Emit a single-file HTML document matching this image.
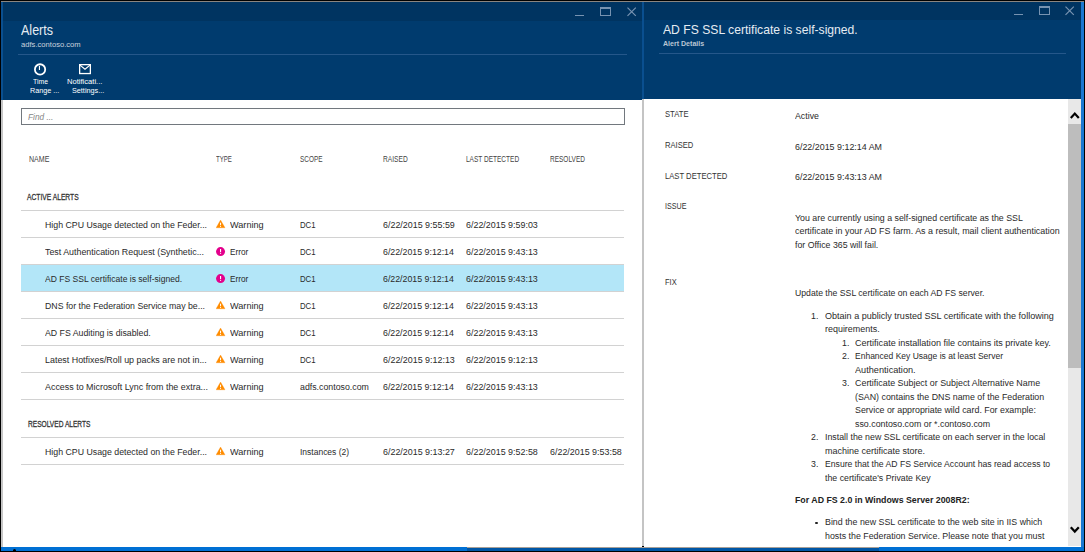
<!DOCTYPE html>
<html><head><meta charset="utf-8"><style>
html,body{margin:0;padding:0;width:1085px;height:552px;overflow:hidden;background:#000}
.r{position:absolute;box-sizing:content-box}
.t{position:absolute;line-height:1;white-space:nowrap;font-family:"Liberation Sans",sans-serif;transform-origin:0 0}
</style></head><body>
<div class="r" style="left:0px;top:0px;width:1085px;height:552px;background:#000;"></div>
<div class="r" style="left:1px;top:1px;width:1083px;height:1px;background:#8a8580;"></div>
<div class="r" style="left:1px;top:2px;width:641px;height:98px;background:#003b6e;"></div>
<div class="r" style="left:1px;top:2px;width:641px;height:19px;background:#003461;"></div>
<div class="r" style="left:1px;top:2px;width:2px;height:98px;background:#0a4f8f;"></div>
<div class="r" style="left:1px;top:100px;width:641px;height:447px;background:#fff;"></div>
<div class="r" style="left:1px;top:100px;width:2px;height:447px;background:#c6c6c6;"></div>
<div class="r" style="left:642px;top:2px;width:2px;height:97px;background:#0a4f8f;"></div>
<div class="r" style="left:642px;top:99px;width:2px;height:447px;background:#c4c4c4;"></div>
<div class="r" style="left:644px;top:2px;width:437px;height:97px;background:#003b6e;"></div>
<div class="r" style="left:644px;top:2px;width:437px;height:18px;background:#003461;"></div>
<div class="r" style="left:644px;top:99px;width:437px;height:448px;background:#fff;"></div>
<div class="r" style="left:1068px;top:99px;width:13px;height:447px;background:#e8e8e8;"></div>
<div class="r" style="left:1068px;top:124px;width:13px;height:244px;background:#bdbdbd;"></div>
<div class="r" style="left:1081px;top:2px;width:3px;height:549px;background:#1a78d2;"></div>
<div class="r" style="left:1px;top:547px;width:1083px;height:4px;background:#0070d4;"></div>
<div class="r" style="left:467px;top:547px;width:412px;height:1px;background:#a8a098;"></div>
<div class="r" style="left:467px;top:548px;width:412px;height:3px;background:#0056a6;"></div>
<div class="r" style="left:18px;top:54px;width:609px;height:1px;background:#25578a;"></div>
<svg class="r" style="left:30px;top:60px" width="20" height="20" viewBox="0 0 20 20"><circle cx="10.05" cy="9.4" r="5.15" fill="none" stroke="#fff" stroke-width="1.8"/><line x1="9.45" y1="6.1" x2="9.45" y2="10" stroke="#fff" stroke-width="1.1"/></svg>
<svg class="r" style="left:75px;top:60px" width="20" height="20" viewBox="0 0 20 20"><rect x="4.65" y="4.65" width="10.7" height="8.9" fill="none" stroke="#fff" stroke-width="1.3"/><polyline points="5,5.1 10,9.2 15,5.1" fill="none" stroke="#fff" stroke-width="1.2"/></svg>
<div class="r" style="left:575px;top:15.1px;width:9px;height:1.2px;background:#7793b1"></div>
<div class="r" style="left:600px;top:7.1px;width:11px;height:9px;box-sizing:border-box;border:1.2px solid #7793b1;border-top-width:2.6px"></div>
<svg class="r" style="left:626.6px;top:7.1px" width="10" height="10" viewBox="0 0 10 10"><path d="M0.5 0.6 L8.8 8.9 M8.8 0.6 L0.5 8.9" stroke="#7793b1" stroke-width="1.2"/></svg>
<div class="r" style="left:1014px;top:14.2px;width:9px;height:1.2px;background:#7793b1"></div>
<div class="r" style="left:1039px;top:6.2px;width:11px;height:9px;box-sizing:border-box;border:1.2px solid #7793b1;border-top-width:2.6px"></div>
<svg class="r" style="left:1065.4px;top:6.2px" width="10" height="10" viewBox="0 0 10 10"><path d="M0.5 0.6 L8.8 8.9 M8.8 0.6 L0.5 8.9" stroke="#7793b1" stroke-width="1.2"/></svg>
<div class="r" style="left:659px;top:53px;width:407px;height:1px;background:#25578a;"></div>
<div class="r" style="left:21px;top:108px;width:602px;height:15px;border:1px solid #72787e;background:#fff"></div>
<div class="r" style="left:21px;top:264px;width:603px;height:27px;background:#b3e6f8;"></div>
<div class="r" style="left:21px;top:210px;width:603px;height:1px;background:#d2d2d2;"></div>
<div class="r" style="left:21px;top:237px;width:603px;height:1px;background:#d2d2d2;"></div>
<div class="r" style="left:21px;top:264px;width:603px;height:1px;background:#d2d2d2;"></div>
<div class="r" style="left:21px;top:291px;width:603px;height:1px;background:#d2d2d2;"></div>
<div class="r" style="left:21px;top:318px;width:603px;height:1px;background:#d2d2d2;"></div>
<div class="r" style="left:21px;top:345px;width:603px;height:1px;background:#d2d2d2;"></div>
<div class="r" style="left:21px;top:372px;width:603px;height:1px;background:#d2d2d2;"></div>
<div class="r" style="left:21px;top:399px;width:603px;height:1px;background:#d2d2d2;"></div>
<div class="r" style="left:21px;top:437px;width:603px;height:1px;background:#d2d2d2;"></div>
<div class="r" style="left:21px;top:464px;width:603px;height:1px;background:#d2d2d2;"></div>
<svg class="r" style="left:216px;top:220.2px" width="10" height="9" viewBox="0 0 10 9"><path d="M4.55 0 L9.0 7.75 L0.1 7.75 Z" fill="#ff8c00" stroke="#ff8c00" stroke-width="0.3" stroke-linejoin="round"/><rect x="4.05" y="2.7" width="1.0" height="2.5" fill="#fff"/><rect x="4.05" y="5.9" width="1.0" height="1.0" fill="#fff"/></svg>
<svg class="r" style="left:216px;top:247.2px" width="10" height="10" viewBox="0 0 10 10"><circle cx="4.55" cy="4.6" r="4.5" fill="#e3008c"/><rect x="4.0" y="2.0" width="1.1" height="3.0" fill="#fff"/><rect x="4.0" y="5.8" width="1.1" height="1.0" fill="#fff"/></svg>
<svg class="r" style="left:216px;top:274.2px" width="10" height="10" viewBox="0 0 10 10"><circle cx="4.55" cy="4.6" r="4.5" fill="#e3008c"/><rect x="4.0" y="2.0" width="1.1" height="3.0" fill="#fff"/><rect x="4.0" y="5.8" width="1.1" height="1.0" fill="#fff"/></svg>
<svg class="r" style="left:216px;top:301.2px" width="10" height="9" viewBox="0 0 10 9"><path d="M4.55 0 L9.0 7.75 L0.1 7.75 Z" fill="#ff8c00" stroke="#ff8c00" stroke-width="0.3" stroke-linejoin="round"/><rect x="4.05" y="2.7" width="1.0" height="2.5" fill="#fff"/><rect x="4.05" y="5.9" width="1.0" height="1.0" fill="#fff"/></svg>
<svg class="r" style="left:216px;top:328.2px" width="10" height="9" viewBox="0 0 10 9"><path d="M4.55 0 L9.0 7.75 L0.1 7.75 Z" fill="#ff8c00" stroke="#ff8c00" stroke-width="0.3" stroke-linejoin="round"/><rect x="4.05" y="2.7" width="1.0" height="2.5" fill="#fff"/><rect x="4.05" y="5.9" width="1.0" height="1.0" fill="#fff"/></svg>
<svg class="r" style="left:216px;top:355.2px" width="10" height="9" viewBox="0 0 10 9"><path d="M4.55 0 L9.0 7.75 L0.1 7.75 Z" fill="#ff8c00" stroke="#ff8c00" stroke-width="0.3" stroke-linejoin="round"/><rect x="4.05" y="2.7" width="1.0" height="2.5" fill="#fff"/><rect x="4.05" y="5.9" width="1.0" height="1.0" fill="#fff"/></svg>
<svg class="r" style="left:216px;top:382.2px" width="10" height="9" viewBox="0 0 10 9"><path d="M4.55 0 L9.0 7.75 L0.1 7.75 Z" fill="#ff8c00" stroke="#ff8c00" stroke-width="0.3" stroke-linejoin="round"/><rect x="4.05" y="2.7" width="1.0" height="2.5" fill="#fff"/><rect x="4.05" y="5.9" width="1.0" height="1.0" fill="#fff"/></svg>
<svg class="r" style="left:216px;top:447.2px" width="10" height="9" viewBox="0 0 10 9"><path d="M4.55 0 L9.0 7.75 L0.1 7.75 Z" fill="#ff8c00" stroke="#ff8c00" stroke-width="0.3" stroke-linejoin="round"/><rect x="4.05" y="2.7" width="1.0" height="2.5" fill="#fff"/><rect x="4.05" y="5.9" width="1.0" height="1.0" fill="#fff"/></svg>
<div class="r" style="left:815.3px;top:521.8px;width:2.7px;height:2.5px;border-radius:1px;background:#222"></div>
<svg class="r" style="left:1069px;top:110px" width="12" height="10" viewBox="0 0 12 10"><polyline points="1.8,8.0 5.8,3.6 9.8,8.0" fill="none" stroke="#000" stroke-width="2.2"/></svg>
<svg class="r" style="left:1069px;top:524px" width="12" height="12" viewBox="0 0 12 12"><polyline points="1.8,3.2 5.8,7.6 9.8,3.2" fill="none" stroke="#000" stroke-width="2.2"/></svg>
<div class="r" style="left:13px;top:549.2px;width:3.2px;height:1.8px;border-radius:1.6px 1.6px 0 0;background:#000"></div>
<div class="t" style="left:21.00px;top:23.15px;font-size:14px;color:#e6ecf2;transform:scaleX(0.8942);">Alerts</div>
<div class="t" style="left:21.00px;top:41.03px;font-size:8px;color:#c9d3de;transform:scaleX(0.9518);">adfs.contoso.com</div>
<div class="t" style="left:32.50px;top:78.23px;font-size:8px;color:#fff;transform:scaleX(0.8541);">Time</div>
<div class="t" style="left:29.90px;top:87.23px;font-size:8px;color:#fff;transform:scaleX(0.9025);">Range ...</div>
<div class="t" style="left:66.80px;top:78.23px;font-size:8px;color:#fff;transform:scaleX(0.9482);">Notificati...</div>
<div class="t" style="left:72.00px;top:87.23px;font-size:8px;color:#fff;transform:scaleX(0.9052);">Settings...</div>
<div class="t" style="left:662.70px;top:22.69px;font-size:13.6px;color:#e6ecf2;transform:scaleX(0.8940);">AD FS SSL certificate is self-signed.</div>
<div class="t" style="left:663.00px;top:39.95px;font-size:7.5px;color:#b9c6d4;transform:scaleX(0.9405);font-weight:bold;">Alert Details</div>
<div class="t" style="left:28.30px;top:112.68px;font-size:9px;color:#858585;transform:scaleX(0.9200);font-style:italic;">Find ...</div>
<div class="t" style="left:29.10px;top:155.30px;font-size:8.5px;color:#444;transform:scaleX(0.8317);">NAME</div>
<div class="t" style="left:216.10px;top:155.30px;font-size:8.5px;color:#444;transform:scaleX(0.7146);">TYPE</div>
<div class="t" style="left:299.50px;top:155.30px;font-size:8.5px;color:#444;transform:scaleX(0.7544);">SCOPE</div>
<div class="t" style="left:382.50px;top:155.30px;font-size:8.5px;color:#444;transform:scaleX(0.7807);">RAISED</div>
<div class="t" style="left:465.90px;top:155.30px;font-size:8.5px;color:#444;transform:scaleX(0.7664);">LAST DETECTED</div>
<div class="t" style="left:549.70px;top:155.30px;font-size:8.5px;color:#444;transform:scaleX(0.7644);">RESOLVED</div>
<div class="t" style="left:27.40px;top:193.02px;font-size:8.6px;color:#333;transform:scaleX(0.7795);-webkit-text-stroke:0.28px #333;">ACTIVE ALERTS</div>
<div class="t" style="left:27.70px;top:419.72px;font-size:8.6px;color:#333;transform:scaleX(0.7674);-webkit-text-stroke:0.28px #333;">RESOLVED ALERTS</div>
<div class="t" style="left:44.90px;top:219.87px;font-size:9.6px;color:#2a2a2a;transform:scaleX(0.9150);">High CPU Usage detected on the Feder...</div>
<div class="t" style="left:229.90px;top:219.87px;font-size:9.6px;color:#2a2a2a;transform:scaleX(0.9506);">Warning</div>
<div class="t" style="left:299.90px;top:219.87px;font-size:9.6px;color:#2a2a2a;transform:scaleX(0.8114);">DC1</div>
<div class="t" style="left:382.80px;top:219.87px;font-size:9.6px;color:#2a2a2a;transform:scaleX(0.9283);">6/22/2015 9:55:59</div>
<div class="t" style="left:466.30px;top:219.87px;font-size:9.6px;color:#2a2a2a;transform:scaleX(0.9283);">6/22/2015 9:59:03</div>
<div class="t" style="left:44.90px;top:246.87px;font-size:9.6px;color:#2a2a2a;transform:scaleX(0.9232);">Test Authentication Request (Synthetic...</div>
<div class="t" style="left:229.90px;top:246.87px;font-size:9.6px;color:#2a2a2a;transform:scaleX(0.8543);">Error</div>
<div class="t" style="left:299.90px;top:246.87px;font-size:9.6px;color:#2a2a2a;transform:scaleX(0.8114);">DC1</div>
<div class="t" style="left:382.80px;top:246.87px;font-size:9.6px;color:#2a2a2a;transform:scaleX(0.9164);">6/22/2015 9:12:14</div>
<div class="t" style="left:466.30px;top:246.87px;font-size:9.6px;color:#2a2a2a;transform:scaleX(0.9283);">6/22/2015 9:43:13</div>
<div class="t" style="left:44.90px;top:273.87px;font-size:9.6px;color:#2a2a2a;transform:scaleX(0.8916);">AD FS SSL certificate is self-signed.</div>
<div class="t" style="left:229.90px;top:273.87px;font-size:9.6px;color:#2a2a2a;transform:scaleX(0.8543);">Error</div>
<div class="t" style="left:299.90px;top:273.87px;font-size:9.6px;color:#2a2a2a;transform:scaleX(0.8114);">DC1</div>
<div class="t" style="left:382.80px;top:273.87px;font-size:9.6px;color:#2a2a2a;transform:scaleX(0.9164);">6/22/2015 9:12:14</div>
<div class="t" style="left:466.30px;top:273.87px;font-size:9.6px;color:#2a2a2a;transform:scaleX(0.9283);">6/22/2015 9:43:13</div>
<div class="t" style="left:44.90px;top:300.87px;font-size:9.6px;color:#2a2a2a;transform:scaleX(0.9121);">DNS for the Federation Service may be...</div>
<div class="t" style="left:229.90px;top:300.87px;font-size:9.6px;color:#2a2a2a;transform:scaleX(0.9506);">Warning</div>
<div class="t" style="left:299.90px;top:300.87px;font-size:9.6px;color:#2a2a2a;transform:scaleX(0.8114);">DC1</div>
<div class="t" style="left:382.80px;top:300.87px;font-size:9.6px;color:#2a2a2a;transform:scaleX(0.9164);">6/22/2015 9:12:14</div>
<div class="t" style="left:466.30px;top:300.87px;font-size:9.6px;color:#2a2a2a;transform:scaleX(0.9283);">6/22/2015 9:43:13</div>
<div class="t" style="left:44.90px;top:327.87px;font-size:9.6px;color:#2a2a2a;transform:scaleX(0.9136);">AD FS Auditing is disabled.</div>
<div class="t" style="left:229.90px;top:327.87px;font-size:9.6px;color:#2a2a2a;transform:scaleX(0.9506);">Warning</div>
<div class="t" style="left:299.90px;top:327.87px;font-size:9.6px;color:#2a2a2a;transform:scaleX(0.8114);">DC1</div>
<div class="t" style="left:382.80px;top:327.87px;font-size:9.6px;color:#2a2a2a;transform:scaleX(0.9164);">6/22/2015 9:12:14</div>
<div class="t" style="left:466.30px;top:327.87px;font-size:9.6px;color:#2a2a2a;transform:scaleX(0.9283);">6/22/2015 9:43:13</div>
<div class="t" style="left:44.90px;top:354.87px;font-size:9.6px;color:#2a2a2a;transform:scaleX(0.9280);">Latest Hotfixes/Roll up packs are not in...</div>
<div class="t" style="left:229.90px;top:354.87px;font-size:9.6px;color:#2a2a2a;transform:scaleX(0.9506);">Warning</div>
<div class="t" style="left:299.90px;top:354.87px;font-size:9.6px;color:#2a2a2a;transform:scaleX(0.8114);">DC1</div>
<div class="t" style="left:382.80px;top:354.87px;font-size:9.6px;color:#2a2a2a;transform:scaleX(0.9283);">6/22/2015 9:12:13</div>
<div class="t" style="left:466.30px;top:354.87px;font-size:9.6px;color:#2a2a2a;transform:scaleX(0.9283);">6/22/2015 9:12:13</div>
<div class="t" style="left:44.90px;top:381.87px;font-size:9.6px;color:#2a2a2a;transform:scaleX(0.9284);">Access to Microsoft Lync from the extra...</div>
<div class="t" style="left:229.90px;top:381.87px;font-size:9.6px;color:#2a2a2a;transform:scaleX(0.9506);">Warning</div>
<div class="t" style="left:299.90px;top:381.87px;font-size:9.6px;color:#2a2a2a;transform:scaleX(0.9162);">adfs.contoso.com</div>
<div class="t" style="left:382.80px;top:381.87px;font-size:9.6px;color:#2a2a2a;transform:scaleX(0.9164);">6/22/2015 9:12:14</div>
<div class="t" style="left:466.30px;top:381.87px;font-size:9.6px;color:#2a2a2a;transform:scaleX(0.9283);">6/22/2015 9:43:13</div>
<div class="t" style="left:44.90px;top:446.87px;font-size:9.6px;color:#2a2a2a;transform:scaleX(0.9150);">High CPU Usage detected on the Feder...</div>
<div class="t" style="left:229.90px;top:446.87px;font-size:9.6px;color:#2a2a2a;transform:scaleX(0.9506);">Warning</div>
<div class="t" style="left:299.90px;top:446.87px;font-size:9.6px;color:#2a2a2a;transform:scaleX(0.8849);">Instances (2)</div>
<div class="t" style="left:382.80px;top:446.87px;font-size:9.6px;color:#2a2a2a;transform:scaleX(0.9283);">6/22/2015 9:13:27</div>
<div class="t" style="left:466.30px;top:446.87px;font-size:9.6px;color:#2a2a2a;transform:scaleX(0.9283);">6/22/2015 9:52:58</div>
<div class="t" style="left:549.70px;top:446.87px;font-size:9.6px;color:#2a2a2a;transform:scaleX(0.9283);">6/22/2015 9:53:58</div>
<div class="t" style="left:665.00px;top:109.19px;font-size:9.7px;color:#333;transform:scaleX(0.7883);">STATE</div>
<div class="t" style="left:665.00px;top:140.09px;font-size:9.7px;color:#333;transform:scaleX(0.7845);">RAISED</div>
<div class="t" style="left:665.00px;top:170.79px;font-size:9.7px;color:#333;transform:scaleX(0.7898);">LAST DETECTED</div>
<div class="t" style="left:665.00px;top:201.29px;font-size:9.7px;color:#333;transform:scaleX(0.7396);">ISSUE</div>
<div class="t" style="left:665.00px;top:276.79px;font-size:9.7px;color:#333;transform:scaleX(0.7752);">FIX</div>
<div class="t" style="left:794.50px;top:110.87px;font-size:9.6px;color:#2a2a2a;transform:scaleX(0.9150);">Active</div>
<div class="t" style="left:794.50px;top:141.87px;font-size:9.6px;color:#2a2a2a;transform:scaleX(0.9267);">6/22/2015 9:12:14 AM</div>
<div class="t" style="left:794.50px;top:172.47px;font-size:9.6px;color:#2a2a2a;transform:scaleX(0.9267);">6/22/2015 9:43:13 AM</div>
<div class="t" style="left:794.80px;top:213.27px;font-size:9.6px;color:#2a2a2a;transform:scaleX(0.9179);">You are currently using a self-signed certificate as the SSL</div>
<div class="t" style="left:794.80px;top:226.47px;font-size:9.6px;color:#2a2a2a;transform:scaleX(0.9276);">certificate in your AD FS farm. As a result, mail client authentication</div>
<div class="t" style="left:794.80px;top:239.67px;font-size:9.6px;color:#2a2a2a;transform:scaleX(0.9150);">for Office 365 will fail.</div>
<div class="t" style="left:794.80px;top:287.87px;font-size:9.6px;color:#2a2a2a;transform:scaleX(0.9035);">Update the SSL certificate on each AD FS server.</div>
<div class="t" style="left:811.30px;top:310.97px;font-size:9.6px;color:#2a2a2a;transform:scaleX(0.9150);">1.</div>
<div class="t" style="left:824.50px;top:310.97px;font-size:9.6px;color:#2a2a2a;transform:scaleX(0.9422);">Obtain a publicly trusted SSL certificate with the following</div>
<div class="t" style="left:824.50px;top:324.46px;font-size:9.6px;color:#2a2a2a;transform:scaleX(0.9312);">requirements.</div>
<div class="t" style="left:842.00px;top:337.95px;font-size:9.6px;color:#2a2a2a;transform:scaleX(0.9150);">1.</div>
<div class="t" style="left:854.80px;top:337.95px;font-size:9.6px;color:#2a2a2a;transform:scaleX(0.9425);">Certificate installation file contains its private key.</div>
<div class="t" style="left:842.00px;top:351.44px;font-size:9.6px;color:#2a2a2a;transform:scaleX(0.9150);">2.</div>
<div class="t" style="left:854.80px;top:351.44px;font-size:9.6px;color:#2a2a2a;transform:scaleX(0.8866);">Enhanced Key Usage is at least Server</div>
<div class="t" style="left:854.80px;top:364.93px;font-size:9.6px;color:#2a2a2a;transform:scaleX(0.9554);">Authentication.</div>
<div class="t" style="left:842.00px;top:378.42px;font-size:9.6px;color:#2a2a2a;transform:scaleX(0.9150);">3.</div>
<div class="t" style="left:854.80px;top:378.42px;font-size:9.6px;color:#2a2a2a;transform:scaleX(0.9282);">Certificate Subject or Subject Alternative Name</div>
<div class="t" style="left:854.80px;top:391.91px;font-size:9.6px;color:#2a2a2a;transform:scaleX(0.9216);">(SAN) contains the DNS name of the Federation</div>
<div class="t" style="left:854.80px;top:405.40px;font-size:9.6px;color:#2a2a2a;transform:scaleX(0.9220);">Service or appropriate wild card. For example:</div>
<div class="t" style="left:854.80px;top:418.89px;font-size:9.6px;color:#2a2a2a;transform:scaleX(0.9213);">sso.contoso.com or *.contoso.com</div>
<div class="t" style="left:811.30px;top:432.38px;font-size:9.6px;color:#2a2a2a;transform:scaleX(0.9150);">2.</div>
<div class="t" style="left:824.50px;top:432.38px;font-size:9.6px;color:#2a2a2a;transform:scaleX(0.9173);">Install the new SSL certificate on each server in the local</div>
<div class="t" style="left:824.50px;top:445.87px;font-size:9.6px;color:#2a2a2a;transform:scaleX(0.9389);">machine certificate store.</div>
<div class="t" style="left:811.30px;top:459.36px;font-size:9.6px;color:#2a2a2a;transform:scaleX(0.9150);">3.</div>
<div class="t" style="left:824.50px;top:459.36px;font-size:9.6px;color:#2a2a2a;transform:scaleX(0.9002);">Ensure that the AD FS Service Account has read access to</div>
<div class="t" style="left:824.50px;top:472.85px;font-size:9.6px;color:#2a2a2a;transform:scaleX(0.9143);">the certificate's Private Key</div>
<div class="t" style="left:794.70px;top:494.77px;font-size:9.6px;color:#222;transform:scaleX(0.9167);font-weight:bold;">For AD FS 2.0 in Windows Server 2008R2:</div>
<div class="t" style="left:824.60px;top:517.47px;font-size:9.6px;color:#2a2a2a;transform:scaleX(0.9211);">Bind the new SSL certificate to the web site in IIS which</div>
<div class="t" style="left:824.60px;top:530.67px;font-size:9.6px;color:#2a2a2a;transform:scaleX(0.9204);">hosts the Federation Service. Please note that you must</div>
</body></html>
